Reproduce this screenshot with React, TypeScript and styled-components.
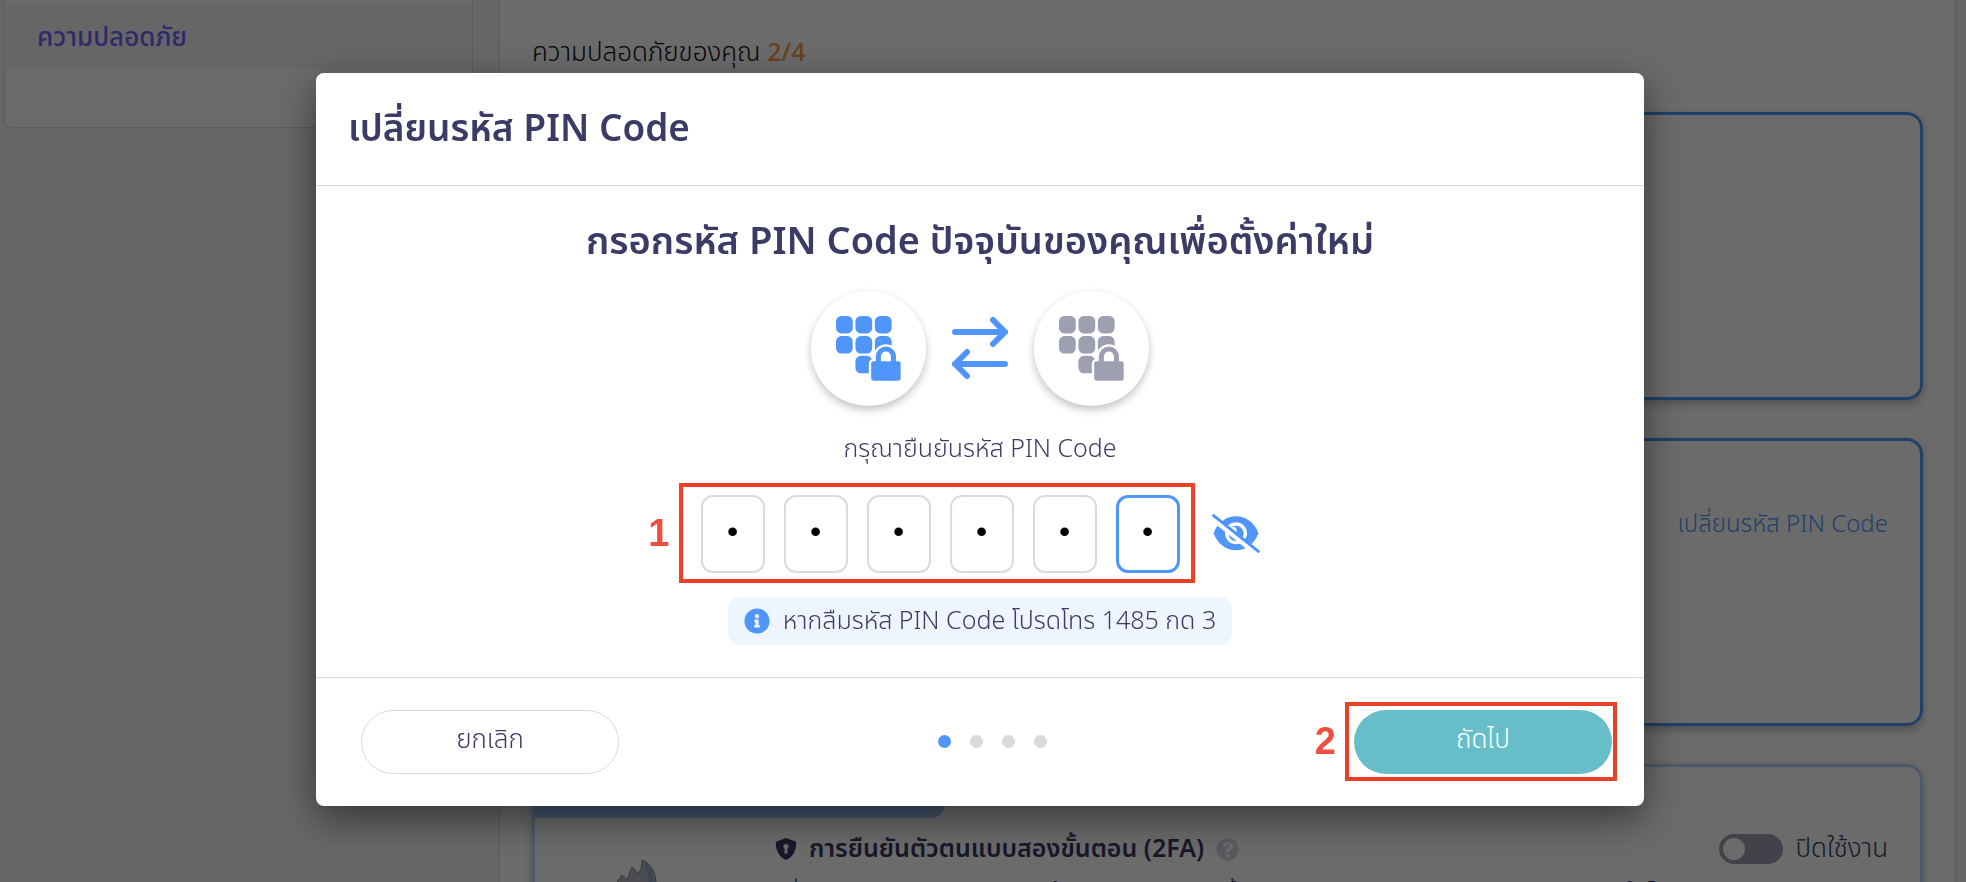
import React, { useState } from "react";
import styled, { createGlobalStyle } from "styled-components";
import { FaInfoCircle, FaQuestionCircle } from "react-icons/fa";

const navy = "#3b3b66";
const blue = "#5096fa";
const line = "#dadae6";
const markRed = "#ea4025";

const GlobalStyle = createGlobalStyle`
  *, *::before, *::after { box-sizing: border-box; }
  body {
    margin: 0;
    overflow: hidden;
    background: #f4f4f9;
    color: ${navy};
    font-family: "Noto Sans Thai", "Noto Sans", sans-serif;
    font-size: 25px;
    font-weight: 300;
    line-height: 32px;
  }
  button, input { font: inherit; color: inherit; }
  h1, h2, h3, p { margin: 0; }
`;

/* Security settings page */

const Page = styled.div`
  display: grid;
  grid-template-columns: 469px minmax(0, 1fr);
  gap: 26px;
  align-items: start;
  height: 100vh;
  padding: 0 10px 0 4px;
  overflow: hidden;
`;

const Sidebar = styled.nav`
  padding: 5px 0 58px;
  background: #fff;
  border: 1px solid ${line};
  border-top: 0;
  border-radius: 0 0 8px 8px;
`;

const SidebarLink = styled.a`
  display: block;
  padding: 17px 32px 15px;
  background: #f2f2f2;
  color: #7068ff;
  font-size: 26px;
  font-weight: 500;
  text-decoration: none;
`;

const Main = styled.main`
  padding: 37px 32px 0;
  background: #fff;
  border: solid ${line};
  border-width: 0 1px;
`;

const Summary = styled.h1`
  margin-bottom: 43px;
  color: #111;
  font-size: 26px;
  font-weight: 300;
`;

const Score = styled.span`
  color: #f9993a;
  font-size: 25px;
  font-weight: 500;
`;

const Card = styled.section<{ $pending?: boolean }>`
  height: 288px;
  margin-bottom: 38px;
  overflow: hidden;
  border: 3px solid ${(p) => (p.$pending ? "#b5d5fd" : blue)};
  border-radius: 16px;
  box-shadow: 0 4px 8px rgba(0, 0, 0, 0.25);
`;

const LinkRow = styled.div`
  display: flex;
  justify-content: flex-end;
  padding: 68px 32px 0;
`;

const CardLink = styled.a`
  color: ${blue};
  font-size: 24px;
  text-decoration: none;
`;

const Ribbon = styled.div`
  width: 410px;
  height: 51px;
  background: #a3cbff;
  border-radius: 0 0 14px 0;
`;

const FactorRow = styled.div`
  display: grid;
  grid-template-columns: 208px minmax(0, 1fr);
  gap: 32px;
  padding: 15px 32px 0 0;
`;

const Art = styled.div`
  display: flex;
  justify-content: center;
  padding: 27px 10px 0 0;
`;

const FactorHead = styled.div`
  display: flex;
  align-items: center;
  justify-content: space-between;
`;

const FactorTitle = styled.h2`
  display: flex;
  align-items: center;
  gap: 12px;
  color: #3b3763;
  font-size: 25px;
  font-weight: 600;
`;

const HelpIcon = styled(FaQuestionCircle)`
  width: 23px;
  height: 23px;
  color: #d5d5e2;
`;

const SwitchLabel = styled.label`
  display: flex;
  align-items: center;
  gap: 13px;
  font-size: 26px;
`;

const Switch = styled.input`
  appearance: none;
  display: flex;
  align-items: center;
  width: 64px;
  height: 30px;
  margin: 0;
  padding: 0 4px;
  background: #9d9db2;
  border-radius: 15px;

  &::before {
    content: "";
    width: 22px;
    height: 22px;
    background: #fff;
    border-radius: 50%;
  }
`;

const FactorText = styled.p`
  padding-top: 13px;
  white-space: nowrap;
`;

/* Dialog */

const Backdrop = styled.div`
  position: fixed;
  inset: 0;
  display: flex;
  align-items: center;
  justify-content: center;
  padding: 0 6px 4px 0;
  background: rgba(0, 0, 0, 0.58);
`;

const Dialog = styled.section`
  width: 1328px;
  max-width: 100%;
  background: #fff;
  border-radius: 8px;
  box-shadow: 0 12px 40px rgba(0, 0, 0, 0.5);
`;

const DialogHeader = styled.header`
  padding: 33px 32px 31px;
  border-bottom: 1px solid ${line};
`;

const DialogTitle = styled.h2`
  font-size: 37px;
  font-weight: 600;
  line-height: 48px;
`;

const DialogBody = styled.div`
  display: flex;
  flex-direction: column;
  align-items: center;
  padding: 33px 32px 32px;
`;

const Heading = styled.h3`
  font-size: 38px;
  font-weight: 600;
  line-height: 48px;
`;

const SwapRow = styled.div`
  display: flex;
  align-items: center;
  gap: 26px;
  margin: 24px 0 27px;
`;

const Disc = styled.div`
  display: flex;
  align-items: center;
  justify-content: center;
  width: 115px;
  height: 115px;
  border-radius: 50%;
  box-shadow: 0 4px 8px rgba(0, 0, 0, 0.24);
`;

const PinRow = styled.div`
  display: flex;
  align-items: center;
  gap: 32px;
  margin: 30px 0 24px;
`;

const PinGroup = styled.div`
  position: relative;
  display: flex;
  gap: 19px;
`;

const PinInput = styled.input`
  width: 64px;
  height: 78px;
  padding: 0 0 4px;
  background: #fff;
  border: 2px solid ${line};
  border-radius: 12px;
  color: #000;
  font-family: "Liberation Sans", sans-serif;
  font-size: 32px;
  text-align: center;
  outline: none;

  &:last-of-type {
    border: 3px solid ${blue};
  }
`;

const EyeButton = styled.button`
  display: flex;
  padding: 0;
  background: none;
  border: 0;
`;

const Hint = styled.p`
  display: flex;
  align-items: center;
  gap: 13px;
  padding: 8px 16px;
  background: #edf5ff;
  border-radius: 12px;

  svg {
    width: 26px;
    height: 26px;
    color: ${blue};
  }
`;

const DialogFooter = styled.footer`
  display: flex;
  align-items: center;
  justify-content: space-between;
  padding: 32px 32px 32px 45px;
  border-top: 1px solid ${line};
`;

const PillButton = styled.button<{ $primary?: boolean }>`
  width: 258px;
  height: 64px;
  padding: 0 16px 4px;
  background: ${(p) => (p.$primary ? "#67bec9" : "#fff")};
  border: ${(p) => (p.$primary ? "0" : `1px solid ${line}`)};
  border-radius: 32px;
  color: ${(p) => (p.$primary ? "#fff" : navy)};
  font-size: 26px;
`;

const Steps = styled.div`
  display: flex;
  gap: 19px;
  padding-left: 12px;
`;

const StepDot = styled.span<{ $active?: boolean }>`
  width: 13px;
  height: 13px;
  background: ${(p) => (p.$active ? blue : "#d9d9d9")};
  border-radius: 50%;
`;

const ButtonSlot = styled.div`
  position: relative;
  display: flex;
`;

/* Numbered frames laid over the controls */

const Frame = styled.span<{ $inset: string }>`
  position: absolute;
  inset: ${(p) => p.$inset};
  display: flex;
  align-items: center;
  border: 4px solid ${markRed};
  pointer-events: none;
`;

const FrameNumber = styled.b`
  position: absolute;
  right: 100%;
  padding-right: 13px;
  color: #f04e3e;
  font-family: "Liberation Sans", sans-serif;
  font-size: 38px;
  font-weight: 700;
  line-height: 40px;
`;

const KeypadLock = ({ color }: { color: string }) => (
  <svg width="65" height="65" viewBox="0 0 194 194" aria-hidden="true">
    <g fill={color}>
      {[
        [0, 0],
        [58, 0],
        [116, 0],
        [0, 60],
        [58, 60],
        [116, 60],
        [58, 119],
      ].map(([x, y]) => (
        <rect key={`${x}-${y}`} x={x} y={y} width="50" height="52" rx="16" />
      ))}
    </g>
    <g stroke="#fff" strokeWidth="14" fill="#fff">
      <rect x="105" y="135" width="88" height="58" rx="7" />
      <path d="M119 138v-17a30 30 0 0 1 60 0v17z" />
    </g>
    <rect x="105" y="135" width="88" height="58" rx="7" fill={color} />
    <path
      d="M126.500 138v-17a22.500 22.500 0 0 1 45 0v17"
      fill="none"
      stroke={color}
      strokeWidth="15"
    />
  </svg>
);

const SwapArrows = () => (
  <svg width="56" height="62" viewBox="0 0 168 186" aria-hidden="true">
    <g
      fill="none"
      stroke={blue}
      strokeWidth="18"
      strokeLinecap="round"
      strokeLinejoin="round"
    >
      <path d="M9 45h150M123 9l36 36-36 36" />
      <path d="M159 141H9M45 105L9 141l36 36" />
    </g>
  </svg>
);

const EyeOff = () => (
  <svg width="48" height="39" viewBox="0 0 144 117" aria-hidden="true">
    <path
      d="M5 58C14 30 40 7 72 7s58 23 67 51c-9 28-35 51-67 51S14 86 5 58z"
      fill={blue}
    />
    <circle cx="72" cy="58" r="33" fill="#fff" />
    <circle cx="72" cy="58" r="23" fill={blue} />
    <circle cx="64" cy="49" r="10" fill="#fff" />
    <path d="M-4 8l134 108" stroke="#fff" strokeWidth="16" />
    <path d="M5 5l134 107" stroke={blue} strokeWidth="9" strokeLinecap="round" />
  </svg>
);

const ShieldIcon = () => (
  <svg width="22" height="24" viewBox="0 0 22 24" aria-hidden="true">
    <path
      d="M11 1l9 3.200c.8.300 1.200.8 1.200 1.600C21.200 14 18 20 11 23 4 20 .8 14 .8 5.800c0-.8.4-1.300 1.200-1.600z"
      fill="#3b3763"
    />
    <circle cx="11" cy="9.500" r="2.600" fill="#fff" />
    <path d="M10 10h2l.6 6.500H9.400z" fill="#fff" />
  </svg>
);

const FlameArt = () => (
  <svg width="76" height="90" viewBox="0 0 76 90" aria-hidden="true">
    <path
      d="M10 90C8 50 14 30 26 15c2 2 4 3 5 5 1-4 3-8 5-13 3 3 5 4 6 7 3-4 4-8 4-14C57 4 61 16 60 30c-1 18-8 36-24 60z"
      fill="#b4b5c0"
      stroke="#86878c"
      strokeWidth="1"
    />
    <path
      d="M48 2c7 5 10 15 10 27-1 14-5 25-10 34 5-20 7-45 0-61z"
      fill="#8ea6c8"
    />
  </svg>
);

export default function App() {
  const [pin, setPin] = useState(["1", "2", "3", "4", "5", "6"]);
  const [twoFactor, setTwoFactor] = useState(false);

  const updateDigit = (index: number, value: string) =>
    setPin(pin.map((digit, i) => (i === index ? value : digit)));

  return (
    <>
      <GlobalStyle />
      <Page>
        <Sidebar>
          <SidebarLink href="#security">ความปลอดภัย</SidebarLink>
        </Sidebar>
        <Main>
          <Summary>
            ความปลอดภัยของคุณ <Score>2/4</Score>
          </Summary>
          <Card />
          <Card>
            <LinkRow>
              <CardLink href="#pin">เปลี่ยนรหัส PIN Code</CardLink>
            </LinkRow>
          </Card>
          <Card $pending>
            <Ribbon />
            <FactorRow>
              <Art>
                <FlameArt />
              </Art>
              <div>
                <FactorHead>
                  <FactorTitle>
                    <ShieldIcon />
                    การยืนยันตัวตนแบบสองขั้นตอน (2FA)
                    <HelpIcon />
                  </FactorTitle>
                  <SwitchLabel>
                    <Switch
                      type="checkbox"
                      checked={twoFactor}
                      onChange={(e) => setTwoFactor(e.target.checked)}
                    />
                    ปิดใช้งาน
                  </SwitchLabel>
                </FactorHead>
                <FactorText>
                  เพิ่มความปลอดภัยของบัญชีด้วยการตรวจสอบขั้นสอง
                  ของการทำรายการทางการเงินภายในไทย
                </FactorText>
              </div>
            </FactorRow>
          </Card>
        </Main>
      </Page>

      <Backdrop>
        <Dialog role="dialog" aria-modal="true" aria-labelledby="dialog-title">
          <DialogHeader>
            <DialogTitle id="dialog-title">เปลี่ยนรหัส PIN Code</DialogTitle>
          </DialogHeader>
          <DialogBody>
            <Heading>กรอกรหัส PIN Code ปัจจุบันของคุณเพื่อตั้งค่าใหม่</Heading>
            <SwapRow>
              <Disc>
                <KeypadLock color={blue} />
              </Disc>
              <SwapArrows />
              <Disc>
                <KeypadLock color="#9f9fb2" />
              </Disc>
            </SwapRow>
            <p id="pin-label">กรุณายืนยันรหัส PIN Code</p>
            <PinRow>
              <PinGroup role="group" aria-labelledby="pin-label">
                {pin.map((digit, i) => (
                  <PinInput
                    key={i}
                    type="password"
                    inputMode="numeric"
                    maxLength={1}
                    aria-labelledby="pin-label"
                    value={digit}
                    onChange={(e) => updateDigit(i, e.target.value)}
                  />
                ))}
                <Frame $inset="-12px -15px -10px -22px">
                  <FrameNumber>1</FrameNumber>
                </Frame>
              </PinGroup>
              <EyeButton type="button" aria-label="แสดงรหัส">
                <EyeOff />
              </EyeButton>
            </PinRow>
            <Hint>
              <FaInfoCircle />
              หากลืมรหัส PIN Code โปรดโทร 1485 กด 3
            </Hint>
          </DialogBody>
          <DialogFooter>
            <PillButton type="button">ยกเลิก</PillButton>
            <Steps>
              <StepDot $active />
              <StepDot />
              <StepDot />
              <StepDot />
            </Steps>
            <ButtonSlot>
              <PillButton type="button" $primary>
                ถัดไป
              </PillButton>
              <Frame $inset="-8px -5px -7px -9px">
                <FrameNumber>2</FrameNumber>
              </Frame>
            </ButtonSlot>
          </DialogFooter>
        </Dialog>
      </Backdrop>
    </>
  );
}
